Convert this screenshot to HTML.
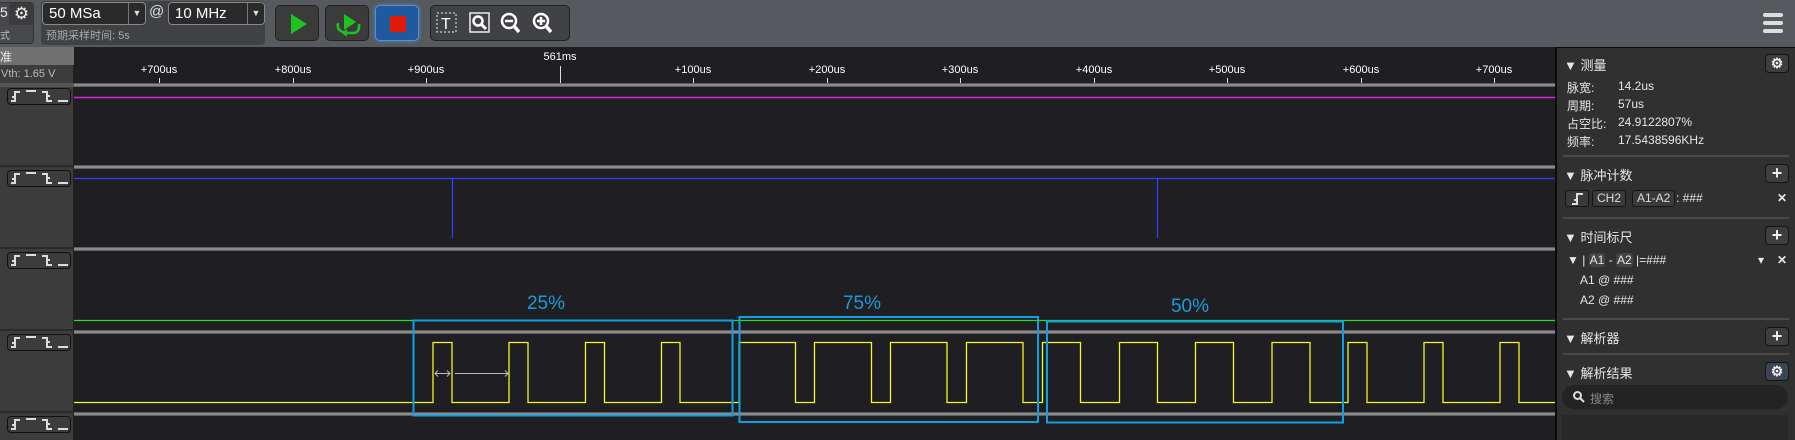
<!DOCTYPE html>
<html><head><meta charset="utf-8"><style>
*{margin:0;padding:0;box-sizing:border-box}
body{width:1795px;height:440px;overflow:hidden;background:#1f1f23;font-family:"Liberation Sans","Noto Sans CJK SC",sans-serif;color:#ddd;position:relative}
.a{position:absolute}
.tb{left:0;top:0;width:1795px;height:47px;background:#56595d}
.box{border:1px solid #1a1a1a;border-radius:4px}
.btn{background:#3b3b3b;border:1px solid #222;border-radius:5px}
.sep{height:4px;left:74px;width:1481px;background:linear-gradient(#4a4a4a,#a0a0a0,#4a4a4a)}
.chb{left:7px;width:64px;height:17px;border:1px solid #111;border-radius:4px;background:#3c3c3c}
.tick{width:1px;background:#ddd}
.tl{font-size:11px;color:#fff;transform:translateX(-50%)}
.p{font-size:12px;color:#e6e6e6}
.h{font-size:13px;color:#e6e6e6}
.div{left:1563px;width:226px;height:2px;background:#4a4a4a}
.sb{width:24px;height:19px;background:#3e3e3e;border:1px solid #151515;border-radius:4px;color:#eee;font-size:18px;line-height:16px;text-align:center;font-weight:bold}
.pill{height:17px;background:#3a3a3a;border:1px solid #151515;border-radius:3px;font-size:12px;line-height:15px;padding:0 4px;color:#ddd}
.pct{font-size:19px;color:#1a9ad6;transform:translateX(-50%)}
</style></head><body>
<div class="a tb"></div>
<div class="a" style="left:-4px;top:2px;width:38px;height:42px;background:#46484b;border-radius:4px;border:1px solid #333"></div>
<div class="a" style="left:0;top:4px;font-size:14px;color:#eee">5</div>
<div class="a" style="left:9px;top:3px;width:25px;height:22px;background:#3b3b3b;border-radius:3px;color:#eee;font-size:17px;text-align:center;line-height:21px">⚙</div>
<div class="a" style="left:0;top:27px;font-size:10px;color:#bbb">式</div>
<div class="a" style="left:41px;top:1px;width:224px;height:44px;background:#3f4144;border-radius:4px"></div>
<div class="a box" style="left:42px;top:2px;width:104px;height:23px;background:#2a2a2a;border-color:#888;font-size:15px;line-height:21px;padding-left:6px;color:#fff">50 MSa</div>
<div class="a" style="left:128px;top:3px;width:17px;height:21px;border-left:1px solid #777;color:#ddd;font-size:9px;text-align:center;line-height:21px">▼</div>
<div class="a" style="left:149px;top:3px;font-size:15px;color:#ddd">@</div>
<div class="a box" style="left:168px;top:2px;width:97px;height:23px;background:#2a2a2a;border-color:#888;font-size:15px;line-height:21px;padding-left:6px;color:#fff">10 MHz</div>
<div class="a" style="left:247px;top:3px;width:17px;height:21px;border-left:1px solid #777;color:#ddd;font-size:9px;text-align:center;line-height:21px">▼</div>
<div class="a" style="left:46px;top:27px;font-size:11px;color:#aaa">预期采样时间: 5s</div>
<div class="a btn" style="left:275px;top:5px;width:44px;height:36px"><svg width="44" height="36"><polygon points="15,8 31,18 15,28" fill="#1dc41d"/></svg></div>
<div class="a btn" style="left:325px;top:5px;width:44px;height:36px"><svg width="44" height="36"><polygon points="18,8 30,16 18,24" fill="#1dc41d"/><path d="M12 17 Q10 26 22 27 L28 27 M28 27 Q34 26 33 18" stroke="#1dc41d" stroke-width="2.5" fill="none"/><polygon points="16,27 21,23 21,31" fill="#1dc41d"/></svg></div>
<div class="a" style="left:375px;top:5px;width:44px;height:36px;background:#1f5aa0;border:1px solid #5f8fc0;border-radius:5px;box-shadow:0 0 4px #4a8ad8"><div class="a" style="left:14px;top:10px;width:16px;height:16px;background:#e01a0a"></div></div>
<div class="a btn" style="left:430px;top:5px;width:140px;height:36px;background:#3f4144"></div>
<svg class="a" style="left:436px;top:10px" width="130" height="26">
<rect x="1" y="3" width="19" height="19" fill="none" stroke="#eee" stroke-dasharray="2,2"/><text x="5" y="19" font-size="16" fill="#fff" font-family="Liberation Sans">T</text>
<rect x="34" y="3" width="19" height="19" fill="none" stroke="#eee" stroke-width="1.5"/><circle cx="42" cy="11" r="4.5" fill="none" stroke="#fff" stroke-width="2.5"/><line x1="45" y1="14" x2="50" y2="19" stroke="#fff" stroke-width="3"/>
<circle cx="73" cy="11" r="7" fill="none" stroke="#fff" stroke-width="2.5"/><line x1="69" y1="11" x2="77" y2="11" stroke="#fff" stroke-width="2.5"/><line x1="78" y1="16" x2="83" y2="22" stroke="#fff" stroke-width="3.5"/>
<circle cx="105" cy="11" r="7" fill="none" stroke="#fff" stroke-width="2.5"/><line x1="101" y1="11" x2="109" y2="11" stroke="#fff" stroke-width="2.5"/><line x1="105" y1="7" x2="105" y2="15" stroke="#fff" stroke-width="2.5"/><line x1="110" y1="16" x2="115" y2="22" stroke="#fff" stroke-width="3.5"/>
</svg>
<div class="a" style="left:1763px;top:13px;width:20px;height:4px;background:#ddd;border-radius:2px"></div>
<div class="a" style="left:1763px;top:21px;width:20px;height:4px;background:#ddd;border-radius:2px"></div>
<div class="a" style="left:1763px;top:29px;width:20px;height:4px;background:#ddd;border-radius:2px"></div>

<div class="a" style="left:0;top:47px;width:74px;height:393px;background:#3c3c3c;border-right:1px solid #222"></div>
<div class="a" style="left:0;top:47px;width:74px;height:18px;background:#707070"></div>
<div class="a" style="left:0;top:48px;font-size:12px;color:#eee">准</div>
<div class="a" style="left:1px;top:68px;font-size:11px;color:#bbb">Vth: 1.65 V</div>
<div class="a" style="left:0;top:83px;width:74px;height:4px;background:#555"></div>
<div class="a" style="left:0;top:165px;width:74px;height:2px;background:#2a2a2a"></div>
<div class="a" style="left:0;top:247px;width:74px;height:2px;background:#2a2a2a"></div>
<div class="a" style="left:0;top:329px;width:74px;height:2px;background:#2a2a2a"></div>
<div class="a" style="left:0;top:411px;width:74px;height:2px;background:#2a2a2a"></div>
<div class="a chb" style="top:88px"></div>
<div class="a chb" style="top:170px"></div>
<div class="a chb" style="top:252px"></div>
<div class="a chb" style="top:334px"></div>
<div class="a chb" style="top:416px"></div>
<svg class="a" style="left:0;top:0" width="74" height="440">
<defs><g id="cg" stroke="#ddd" stroke-width="2" fill="none">
<path d="M11 13 H15 V4 H20"/><path d="M12 9 H15"/>
<path d="M26 3 H36"/>
<path d="M42 4 H47 V13 H52"/><path d="M47 8 H50"/>
<path d="M58 13 H68"/>
</g></defs>
<use href="#cg" y="88"/><use href="#cg" y="170"/><use href="#cg" y="252"/><use href="#cg" y="334"/><use href="#cg" y="416"/>
</svg>

<div class="a tl" style="left:159px;top:64px">+700us</div><div class="a tick" style="left:159px;top:78px;height:5px"></div>
<div class="a tl" style="left:293px;top:64px">+800us</div><div class="a tick" style="left:293px;top:78px;height:5px"></div>
<div class="a tl" style="left:426px;top:64px">+900us</div><div class="a tick" style="left:426px;top:78px;height:5px"></div>
<div class="a tl" style="left:560px;top:51px">561ms</div><div class="a tick" style="left:560px;top:66px;height:17px"></div>
<div class="a tl" style="left:693px;top:64px">+100us</div><div class="a tick" style="left:693px;top:78px;height:5px"></div>
<div class="a tl" style="left:827px;top:64px">+200us</div><div class="a tick" style="left:827px;top:78px;height:5px"></div>
<div class="a tl" style="left:960px;top:64px">+300us</div><div class="a tick" style="left:960px;top:78px;height:5px"></div>
<div class="a tl" style="left:1094px;top:64px">+400us</div><div class="a tick" style="left:1094px;top:78px;height:5px"></div>
<div class="a tl" style="left:1227px;top:64px">+500us</div><div class="a tick" style="left:1227px;top:78px;height:5px"></div>
<div class="a tl" style="left:1361px;top:64px">+600us</div><div class="a tick" style="left:1361px;top:78px;height:5px"></div>
<div class="a tl" style="left:1494px;top:64px">+700us</div><div class="a tick" style="left:1494px;top:78px;height:5px"></div>

<div class="a sep" style="top:83px"></div>
<div class="a sep" style="top:165px"></div>
<div class="a sep" style="top:247px"></div>
<div class="a sep" style="top:330px"></div>
<div class="a sep" style="top:412px"></div>

<svg class="a" style="left:0;top:0" width="1555" height="440">
<line x1="74" y1="97.5" x2="1555" y2="97.5" stroke="#e020e0" stroke-width="1.5"/>
<line x1="74" y1="178.5" x2="1555" y2="178.5" stroke="#3040ff" stroke-width="1.2"/>
<line x1="452.5" y1="178" x2="452.5" y2="238" stroke="#3040ff" stroke-width="1.2"/>
<line x1="1157.5" y1="178" x2="1157.5" y2="238" stroke="#3040ff" stroke-width="1.2"/>
<line x1="74" y1="320.5" x2="1555" y2="320.5" stroke="#20e020" stroke-width="1.2"/>
<path d="M74 402.5 H433 V342.5 H452 V402.5 H509 V342.5 H528 V402.5 H585.5 V342.5 H604.5 V402.5 H661.5 V342.5 H680 V402.5 H739 V342.5 H795.5 V402.5 H814.5 V342.5 H871.5 V402.5 H890.5 V342.5 H947 V402.5 H966.5 V342.5 H1023 V402.5 H1042.5 V342.5 H1080.5 V402.5 H1119.5 V342.5 H1157.5 V402.5 H1195.5 V342.5 H1233.5 V402.5 H1272 V342.5 H1310 V402.5 H1348 V342.5 H1367 V402.5 H1424 V342.5 H1443 V402.5 H1500 V342.5 H1519 V402.5 H1555" fill="none" stroke="#f5f520" stroke-width="1.3"/>
<g stroke="#bbb" stroke-width="1" fill="none"><line x1="435" y1="373.5" x2="450" y2="373.5"/><path d="M438 370.5 L435 373.5 L438 376.5 M447 370.5 L450 373.5 L447 376.5"/><line x1="455" y1="373.5" x2="508" y2="373.5"/><path d="M505 370.5 L508 373.5 L505 376.5"/></g>
<rect x="413.5" y="320.5" width="319" height="95" fill="none" stroke="#0ea0e6" stroke-width="2"/>
<rect x="739.5" y="317" width="298.5" height="105" fill="none" stroke="#0ea0e6" stroke-width="2"/>
<rect x="1047" y="321.5" width="296" height="101" fill="none" stroke="#0ea0e6" stroke-width="2"/>
</svg>
<div class="a pct" style="left:546px;top:293px">25%</div>
<div class="a pct" style="left:862px;top:293px">75%</div>
<div class="a pct" style="left:1190px;top:296px">50%</div>

<div class="a" style="left:1555px;top:47px;width:240px;height:393px;background:#303030;border-left:2px solid #0c0c0c;border-top:1px solid #0c0c0c"></div>
<div class="a h" style="left:1564px;top:55px">▼ 测量</div>
<div class="a sb" style="left:1765px;top:54px;font-size:14px">⚙</div>
<div class="a p" style="left:1567px;top:79px">脉宽:</div><div class="a p" style="left:1618px;top:79px">14.2us</div>
<div class="a p" style="left:1567px;top:97px">周期:</div><div class="a p" style="left:1618px;top:97px">57us</div>
<div class="a p" style="left:1567px;top:115px">占空比:</div><div class="a p" style="left:1618px;top:115px">24.9122807%</div>
<div class="a p" style="left:1567px;top:133px">频率:</div><div class="a p" style="left:1618px;top:133px">17.5438596KHz</div>
<div class="a div" style="top:155px"></div>
<div class="a h" style="left:1564px;top:165px">▼ 脉冲计数</div>
<div class="a sb" style="left:1765px;top:164px">+</div>
<div class="a pill" style="left:1565px;top:190px;width:24px"><svg width="16" height="14" style="position:absolute;left:4px;top:1px"><path d="M2 12 H7 V2 H13 M4 8 H7" stroke="#ddd" stroke-width="2" fill="none"/></svg></div>
<div class="a pill" style="left:1592px;top:190px">CH2</div>
<div class="a pill" style="left:1632px;top:190px">A1-A2</div>
<div class="a p" style="left:1676px;top:191px">: ###</div>
<div class="a p" style="left:1777px;top:191px;font-weight:bold">✕</div>
<div class="a div" style="top:217px"></div>
<div class="a h" style="left:1564px;top:227px">▼ 时间标尺</div>
<div class="a sb" style="left:1765px;top:226px">+</div>
<div class="a p" style="left:1567px;top:253px">▼ | <span style="background:#444;border-radius:3px;padding:0 1px">A1</span> - <span style="background:#444;border-radius:3px;padding:0 1px">A2</span> |=###</div>
<div class="a p" style="left:1758px;top:253px">▾</div>
<div class="a p" style="left:1777px;top:253px;font-weight:bold">✕</div>
<div class="a p" style="left:1580px;top:273px">A1 @ ###</div>
<div class="a p" style="left:1580px;top:293px">A2 @ ###</div>
<div class="a div" style="top:318px"></div>
<div class="a h" style="left:1564px;top:328px">▼ 解析器</div>
<div class="a sb" style="left:1765px;top:327px">+</div>
<div class="a div" style="top:353px"></div>
<div class="a h" style="left:1564px;top:363px">▼ 解析结果</div>
<div class="a sb" style="left:1765px;top:362px;font-size:14px;background:#3a4452">⚙</div>
<div class="a" style="left:1562px;top:385px;width:226px;height:24px;background:#232323;border-radius:12px"></div>
<svg class="a" style="left:1572px;top:390px" width="14" height="14"><circle cx="5.5" cy="5.5" r="3.5" stroke="#ddd" stroke-width="2" fill="none"/><line x1="8" y1="8" x2="12" y2="12" stroke="#ddd" stroke-width="2"/></svg>
<div class="a p" style="left:1590px;top:390px;color:#888">搜索</div>
<div class="a" style="left:1562px;top:415px;width:226px;height:25px;background:#282828"></div>
</body></html>
